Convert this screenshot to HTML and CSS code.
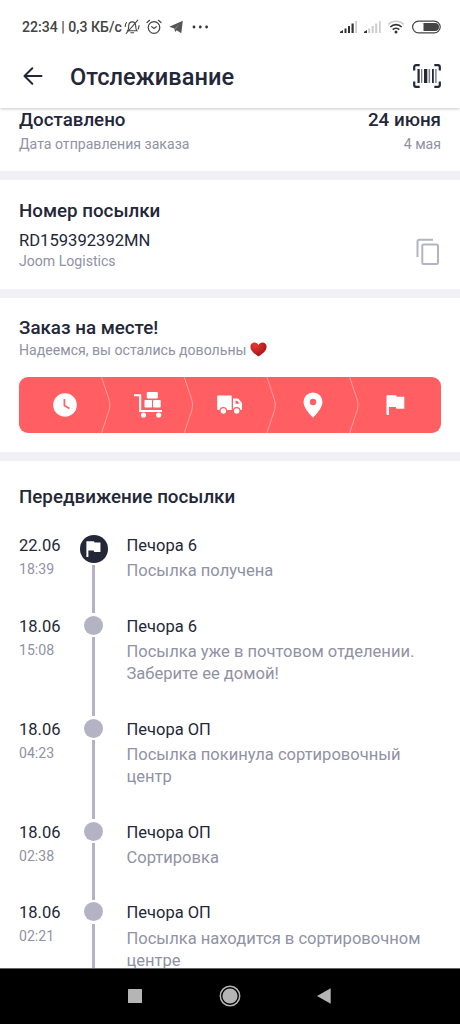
FILE: index.html
```html
<!DOCTYPE html>
<html lang="ru">
<head>
<meta charset="utf-8">
<title>Отслеживание</title>
<link rel="stylesheet" href="styles.css">
</head>
<body>
<div class="screen">
  <header class="top">
    <div class="status">
      <span class="status-text">22:34 | 0,3 КБ/с</span>
      <svg class="st-bell" width="16" height="16" viewBox="0 0 16 16" fill="none" stroke="#444" stroke-width="1.1" stroke-linecap="round"><path d="M3.500 11.800h9.500c-1.200-1.200-1.300-2.400-1.300-4.800C11.700 4.300 10.300 2.900 8.200 2.900S4.700 4.300 4.700 7c0 2.400-.1 3.600-1.200 4.800zM6.800 13.800h2.800M2.200 14.500L13.800 1.200M1.200 7.500c0-2 .5-3 1.300-4M15 6.500c0 1.500-.3 2.500-.8 3.500"/></svg>
      <svg class="st-alarm" width="16" height="16" viewBox="0 0 16 16" fill="none" stroke="#444" stroke-width="1.2" stroke-linecap="round"><circle cx="8" cy="8.500" r="5.800"/><path d="M1 3.500L3.600 1.300M15 3.500L12.400 1.300M5.600 7.600L8 9.500l2.400-1.900"/></svg>
      <svg class="st-plane" width="14" height="14" viewBox="0 0 14 14"><path d="M.3 6.800L13.800.8 12.300 13.200 7.600 10.200 6.200 12 5.300 8.500z" fill="#555"/><path d="M5.500 8.500L11 3.700 6.600 9.300" fill="#888"/></svg>
      <svg class="st-dots" width="17" height="4" viewBox="0 0 17 4" fill="#333"><circle cx="2" cy="2" r="1.400"/><circle cx="8.300" cy="2" r="1.400"/><circle cx="14.600" cy="2" r="1.400"/></svg>
      <svg class="st-right" width="102" height="14" viewBox="0 0 102 14">
        <path d="M0 13v-1.200L3 10v3zM4.500 13V8.500h2V13zM8 13V6h2v7zM11.500 13V3.500h2.200V13z" fill="#333"/>
        <path d="M15.300 13V1h1.700v12z" fill="#ccc"/>
        <path d="M24 13v-1.200L27 10v3z" fill="#333"/>
        <path d="M28.200 13V8.500h2V13zM31.700 13V6h2v7zM35.200 13V3.500h2V13zM39 13V1h1.700v12z" fill="#ccc"/>
        <g fill="none" stroke-width="1.700"><path d="M48.200 4.400a11.200 11.200 0 0 1 15.600 0" stroke="#ccc"/><path d="M50.300 7a8 8 0 0 1 11.400 0M52.700 9.600a4.800 4.800 0 0 1 6.600 0" stroke="#333"/></g>
        <circle cx="56" cy="12" r="1.500" fill="#333"/>
        <rect x="72.600" y="1.100" width="27.600" height="11.800" rx="5.900" fill="none" stroke="#444" stroke-width="1.200"/>
        <path d="M83.500 3H95a4 4 0 0 1 0 8H83.500z" fill="#444"/>
      </svg>
    </div>
    <div class="appbar">
      <svg width="20" height="20" viewBox="0 0 20 20" fill="none" stroke="#232738" stroke-width="2" stroke-linecap="round" stroke-linejoin="round"><path d="M18.500 10H2M9.300 2.200L1.500 10l7.800 7.800"/></svg>
      <h1 class="title">Отслеживание</h1>
      <svg class="scan" width="28" height="24" viewBox="0 0 28 24"><path d="M1.200 6.500V3a1.800 1.800 0 0 1 1.800-1.800h3.700M21.300 1.200H25A1.800 1.800 0 0 1 26.800 3v3.500M1.200 17.500V21A1.800 1.800 0 0 0 3 22.800h3.700M21.300 22.800H25a1.800 1.800 0 0 0 1.800-1.800v-3.500" fill="none" stroke="#232738" stroke-width="2.200"/><path d="M4.500 5h2.200v14H4.500zM11 5h3.300v14H11zM19 5h1.800v14H19z" fill="#232738"/><path d="M8 5h1.300v14H8zM15.600 5h1.500v14h-1.500zM22.200 5h1.400v14h-1.400z" fill="#777a87"/></svg>
    </div>
  </header>

  <main class="content">
    <section class="card delivered">
      <div class="pair"><h2>Доставлено</h2><h2>24 июня</h2></div>
      <div class="pair small"><span>Дата отправления заказа</span><span>4 мая</span></div>
    </section>

    <section class="card parcel">
      <div>
        <h2>Номер посылки</h2>
        <div class="number">RD159392392MN</div>
        <div class="small">Joom Logistics</div>
      </div>
      <svg class="copy" width="24" height="28" viewBox="0 0 24 28" fill="none" stroke="#b3b3c3" stroke-width="2"><path d="M1.500 19V3.500A1.800 1.800 0 0 1 3.300 1.700H17"/><rect x="6.300" y="6.500" width="15.700" height="19.500" rx="1.300"/></svg>
    </section>

    <section class="card arrived">
      <h2>Заказ на месте!</h2>
      <div class="small wish"><span>Надеемся, вы остались довольны</span>
        <svg width="17" height="15" viewBox="0 0 17 15"><defs><radialGradient id="heart" cx=".3" cy=".2" r=".8"><stop offset="0" stop-color="#e23a30"/><stop offset="1" stop-color="#ad1217"/></radialGradient></defs><path d="M8.500 14.600C6 12.500.4 9.500.4 4.700.4 2 2.200.4 4.500.4c1.800 0 3.200.9 4 2.600.8-1.700 2.200-2.600 4-2.600 2.300 0 4.100 1.600 4.100 4.300 0 4.800-5.600 7.800-8.100 9.900z" fill="url(#heart)"/></svg>
      </div>
      <div class="steps">
        <div class="step"><svg width="24" height="24" viewBox="0 0 24 24"><circle cx="12" cy="12" r="11.800" fill="#fff"/><path d="M11.400 6v6.500l5 3" fill="none" stroke="#ff5f62" stroke-width="1.700"/></svg></div>
        <div class="step"><svg width="28" height="26" viewBox="0 0 28 26" fill="#fff"><path d="M0 2.200h7.200v15.800H28v2.100H5.100V4.300H0z"/><rect x="12.800" width="11" height="6.500" rx=".8"/><rect x="10.500" y="8" width="7.500" height="7.500" rx=".8"/><rect x="19" y="8" width="7.700" height="7.500" rx=".8"/><circle cx="9.500" cy="23" r="2.600"/><circle cx="24.700" cy="23" r="2.600"/></svg></div>
        <div class="step"><svg width="26" height="20" viewBox="0 0 26 20"><path d="M1 .5h13.700V15H1a.8.8 0 0 1-.8-.8V1.300A.8.8 0 0 1 1 .5zM16 3.500h4.300c.6 0 1 .2 1.400.6l2.900 3.500c.3.400.4.800.4 1.200v5.400a.8.8 0 0 1-.8.8H16z" fill="#fff"/><path d="M18.500 5.700h1.800l2.200 3h-4z" fill="#ff5f62"/><g fill="#fff" stroke="#ff5f62" stroke-width="1.200"><circle cx="6.300" cy="16" r="3.300"/><circle cx="19.700" cy="16" r="3.300"/></g></svg></div>
        <div class="step"><svg width="20" height="26" viewBox="0 0 20 26"><path d="M10 .5a9.500 9.500 0 0 0-9.500 9.600C.5 16.800 10 25.700 10 25.700s9.500-8.900 9.500-15.600A9.500 9.500 0 0 0 10 .5z" fill="#fff"/><circle cx="10" cy="10" r="3.200" fill="#ff5f62"/></svg></div>
        <div class="step"><svg width="19" height="20" viewBox="0 0 19 20" fill="#fff"><path d="M1.200.3H10l.9 1.500h7.400v12H10.500L9.600 12H3v7.300a.7.7 0 0 1-.7.700H1.200a.7.700 0 0 1-.7-.7V1A.7.7 0 0 1 1.200.3z"/></svg></div>
        <svg class="cuts" width="422" height="56" viewBox="0 0 422 56" fill="none" stroke="#ffa0a0" stroke-width="1"><path d="M82.500 0l7.700 23q1.400 5 0 10L82.500 56M165.200 0l7.700 23q1.400 5 0 10L165.200 56M247.900 0l7.700 23q1.400 5 0 10L247.900 56M330.600 0l7.700 23q1.400 5 0 10L330.600 56"/></svg>
      </div>
    </section>

    <section class="card moves">
      <h2>Передвижение посылки</h2>
      <ol class="timeline">
        <li class="event">
          <div class="when"><div class="date">22.06</div><div class="small">18:39</div></div>
          <div class="rail"><span class="dot current"><svg width="15" height="16" viewBox="0 0 19 20" fill="#fff"><path d="M.5.3H10l.9 1.500h7.400v12H10.500L9.600 12H3v8H.5z"/></svg></span><span class="line"></span></div>
          <div class="what"><div class="place">Печора 6</div><div class="desc">Посылка получена</div></div>
        </li>
        <li class="event">
          <div class="when"><div class="date">18.06</div><div class="small">15:08</div></div>
          <div class="rail"><span class="dot"></span><span class="line"></span></div>
          <div class="what"><div class="place">Печора 6</div><div class="desc">Посылка уже в почтовом отделении.<br>Заберите ее домой!</div></div>
        </li>
        <li class="event">
          <div class="when"><div class="date">18.06</div><div class="small">04:23</div></div>
          <div class="rail"><span class="dot"></span><span class="line"></span></div>
          <div class="what"><div class="place">Печора ОП</div><div class="desc">Посылка покинула сортировочный<br>центр</div></div>
        </li>
        <li class="event">
          <div class="when"><div class="date">18.06</div><div class="small">02:38</div></div>
          <div class="rail"><span class="dot"></span><span class="line"></span></div>
          <div class="what"><div class="place">Печора ОП</div><div class="desc">Сортировка</div></div>
        </li>
        <li class="event">
          <div class="when"><div class="date">18.06</div><div class="small">02:21</div></div>
          <div class="rail"><span class="dot"></span><span class="line"></span></div>
          <div class="what"><div class="place">Печора ОП</div><div class="desc">Посылка находится в сортировочном<br>центре</div></div>
        </li>
      </ol>
    </section>
  </main>

  <nav class="navbar">
    <svg width="14" height="14" viewBox="0 0 14 14"><rect width="14" height="14" rx=".5" fill="#b5b5b5"/></svg>
    <svg width="22" height="22" viewBox="0 0 22 22"><circle cx="11" cy="11" r="9.700" fill="none" stroke="#b5b5b5" stroke-width="1.500"/><circle cx="11" cy="11" r="7.600" fill="#b5b5b5"/></svg>
    <svg width="14" height="16" viewBox="0 0 14 16"><path d="M0 8L13.700.3v15.400z" fill="#b5b5b5"/></svg>
  </nav>
</div>
</body>
</html>
```
FILE: styles.css
```css
* { box-sizing: border-box; }
body { margin: 0; font-family: Roboto, "Noto Sans", sans-serif; color: #232738; background: #fff; }
h1, h2 { margin: 0; font-weight: 500; white-space: nowrap; }
h2 { font-size: 18.75px; line-height: 22px; }
svg { display: block; flex: none; }

.screen { display: flex; flex-direction: column; width: 460px; height: 1024px; overflow: hidden; }
.top { flex: none; height: 108px; background: #fff; box-shadow: 0 1px 3px rgba(0, 0, 0, .22); z-index: 1; }
.status { display: flex; align-items: center; height: 44px; padding: 10px 18px 0 22px; }
.status-text { width: 101px; font-size: 14.1px; font-weight: 500; line-height: 18px; color: #444; white-space: nowrap; }
.st-bell { margin-left: 1px; }
.st-alarm { margin-left: 6px; }
.st-plane { margin-left: 7px; }
.st-dots { margin-left: 9px; }
.st-right { margin-left: auto; }
.appbar { display: flex; align-items: center; height: 64px; padding: 0 19px 0 23px; }
.title { margin: 2px 0 0 27px; font-size: 23.6px; line-height: 30px; }
.scan { margin-left: auto; }

.content { flex: 1; min-height: 0; overflow: hidden; }
.card { padding: 0 19px; }
.card + .card { border-top: 9px solid #f0f0f5; }
.small { font-size: 14.1px; line-height: 18px; color: #9092a5; white-space: nowrap; }
.pair { display: flex; justify-content: space-between; }
.delivered { height: 63.4px; padding-top: 1px; }
.delivered .pair:first-child { margin-bottom: 4px; }
.parcel { display: flex; justify-content: space-between; height: 117.6px; padding-top: 19.6px; }
.number { margin: 9px 0 1px; font-size: 16.6px; line-height: 20px; }
.copy { margin: 38px 1px 0 0; }
.arrived { height: 163px; padding-top: 19px; }
.wish { display: flex; align-items: center; gap: 3.5px; margin-top: 2px; }
.steps { position: relative; display: flex; height: 56px; margin-top: 18px; padding: 0 4.75px; background: #ff5f62; border-radius: 9px; }
.step { flex: 1; display: flex; align-items: center; justify-content: center; }
.cuts { position: absolute; left: 0; top: 0; }

.moves { padding-top: 25px; }
.timeline { margin: 26.9px 0 0; padding: 0; list-style: none; }
.event { display: flex; }
.when { width: 60px; }
.date, .place { font-size: 16.5px; line-height: 22px; white-space: nowrap; }
.when .small { margin-top: 3px; }
.rail { display: flex; flex-direction: column; align-items: center; width: 29px; }
.dot { display: flex; flex: none; align-items: center; justify-content: center; width: 19px; height: 19px; border-radius: 50%; background: #b3b3c3; }
.dot.current { width: 28px; height: 28px; background: #232738; }
.line { flex: 1; width: 2.5px; margin: 2.5px 0; background: #b3b3c3; }
.what { margin-left: 18.5px; padding-bottom: 33.38px; }
.desc { margin-top: 3.5px; font-size: 16.55px; line-height: 22px; color: #9092a5; white-space: nowrap; }

.navbar { display: flex; flex: none; align-items: center; height: 56px; padding: 0 129px 2px 128px; justify-content: space-between; background: #000; border-top: 1px solid #666; }
```
